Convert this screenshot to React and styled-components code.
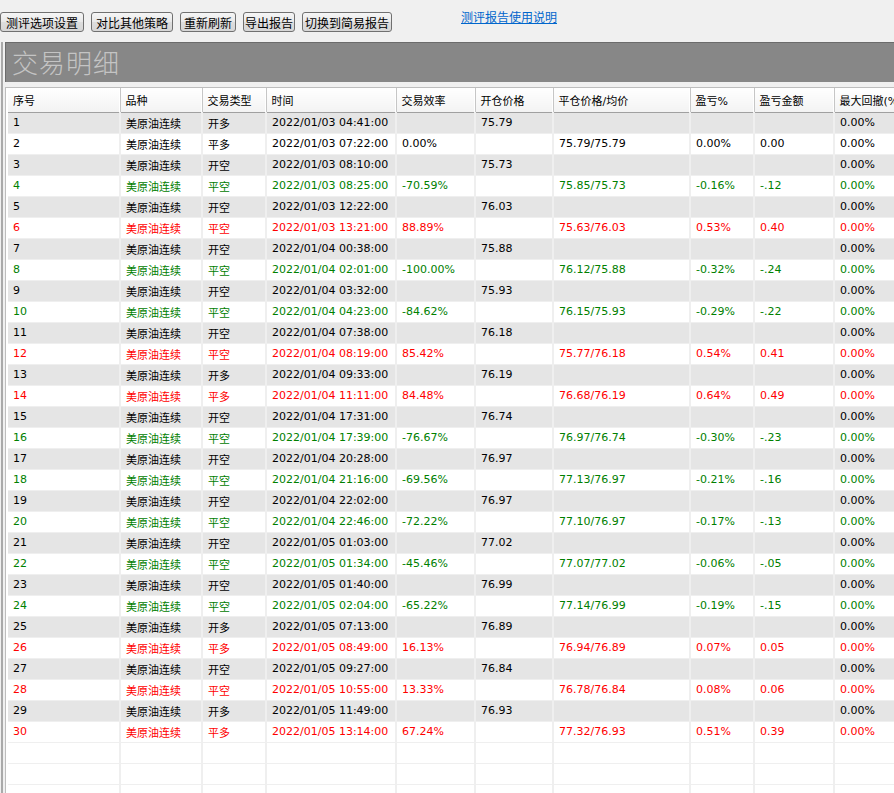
import React from 'react'
import styled, { createGlobalStyle } from 'styled-components'

const GlobalStyle = createGlobalStyle`
  html, body {
    margin: 0;
    padding: 0;
    background: #f0f0f0;
  }
`

const cjk = `"DejaVu Sans", "Noto Sans CJK SC", sans-serif`

const Page = styled.div`
  width: 894px;
  height: 793px;
  overflow: hidden;
  background: #f0f0f0;
  font-family: ${cjk};
  font-size: 11px;
  color: #000;
`

const Toolbar = styled.div`
  height: 42px;
  box-sizing: border-box;
  padding-top: 12px;
  display: flex;
  align-items: flex-start;
  gap: 7px;
`

const ToolButton = styled.button`
  width: ${({ $w }) => $w}px;
  height: 20px;
  padding: 0;
  box-sizing: border-box;
  border: 1px solid #707070;
  border-radius: 3px;
  background: linear-gradient(#f6f6f6, #e8e8e8 50%, #dddddd 51%, #d6d6d6);
  font-family: "Noto Sans CJK SC", sans-serif;
  font-size: 12px;
  line-height: 17px;
  color: #000;
  white-space: nowrap;
`

const HelpLink = styled.a`
  margin-left: 62px;
  margin-top: -3px;
  font-family: "Noto Sans CJK SC", sans-serif;
  font-size: 12px;
  line-height: 16px;
  color: #0066cc;
  text-decoration: underline;
  cursor: pointer;
`

const Frame = styled.div`
  margin-left: 1px;
  border-left: 2px solid #a9a9a9;
  padding-left: 2px;
  height: 751px;
`

const TitleBar = styled.div`
  height: 40px;
  box-sizing: border-box;
  border-top: 1px solid #6b6b6b;
  border-left: 1px solid #6b6b6b;
  background: #878787;
  padding-left: 6px;
  font-family: "Noto Sans CJK SC", sans-serif;
  font-weight: 300;
  font-size: 26px;
  line-height: 37px;
  letter-spacing: 1px;
  color: #c4c4c4;
`

const GridBox = styled.div`
  margin-top: 5px;
  border-top: 1px solid #bdbdbd;
  border-left: 1px solid #bdbdbd;
  background: #fff;
  padding: 0 0 0 2px;
  height: 706px;
  overflow: hidden;
`

const Table = styled.table`
  table-layout: fixed;
  border-collapse: collapse;
  width: 906px;
`

const HeadCell = styled.th`
  height: 24px;
  padding: 0 5px;
  box-sizing: border-box;
  text-align: left;
  font-weight: normal;
  white-space: nowrap;
  overflow: hidden;
  background: linear-gradient(#ffffff, #f3f3f3);
  border-right: 1px solid #c6c6c6;
  box-shadow: inset -1px 0 0 #ffffff;
  border-bottom: 1px solid #a0a0a0;
`

const Row = styled.tr`
  background: ${({ $shade }) => ($shade ? '#e5e5e5' : '#ffffff')};
  color: ${({ $tone }) => ($tone === 'up' ? '#ff0000' : $tone === 'down' ? '#008000' : '#000000')};
`

const Cell = styled.td`
  height: 21px;
  padding: 0 5px;
  box-sizing: border-box;
  white-space: nowrap;
  overflow: hidden;
  border-right: 2px solid #efefef;
  border-bottom: 1px solid #efefef;
`

const columns = [
  { title: '序号', w: 112 },
  { title: '品种', w: 82 },
  { title: '交易类型', w: 64 },
  { title: '时间', w: 130 },
  { title: '交易效率', w: 79 },
  { title: '开仓价格', w: 78 },
  { title: '平仓价格/均价', w: 137 },
  { title: '盈亏%', w: 64 },
  { title: '盈亏金额', w: 80 },
  { title: '最大回撤(%)', w: 80 },
]

// [type, time, efficiency, open, close, pnl%, amount]
const trades = [
  ['开多', '2022/01/03 04:41:00', '', '75.79', '', '', ''],
  ['平多', '2022/01/03 07:22:00', '0.00%', '', '75.79/75.79', '0.00%', '0.00'],
  ['开空', '2022/01/03 08:10:00', '', '75.73', '', '', ''],
  ['平空', '2022/01/03 08:25:00', '-70.59%', '', '75.85/75.73', '-0.16%', '-.12'],
  ['开空', '2022/01/03 12:22:00', '', '76.03', '', '', ''],
  ['平空', '2022/01/03 13:21:00', '88.89%', '', '75.63/76.03', '0.53%', '0.40'],
  ['开空', '2022/01/04 00:38:00', '', '75.88', '', '', ''],
  ['平空', '2022/01/04 02:01:00', '-100.00%', '', '76.12/75.88', '-0.32%', '-.24'],
  ['开空', '2022/01/04 03:32:00', '', '75.93', '', '', ''],
  ['平空', '2022/01/04 04:23:00', '-84.62%', '', '76.15/75.93', '-0.29%', '-.22'],
  ['开空', '2022/01/04 07:38:00', '', '76.18', '', '', ''],
  ['平空', '2022/01/04 08:19:00', '85.42%', '', '75.77/76.18', '0.54%', '0.41'],
  ['开多', '2022/01/04 09:33:00', '', '76.19', '', '', ''],
  ['平多', '2022/01/04 11:11:00', '84.48%', '', '76.68/76.19', '0.64%', '0.49'],
  ['开空', '2022/01/04 17:31:00', '', '76.74', '', '', ''],
  ['平空', '2022/01/04 17:39:00', '-76.67%', '', '76.97/76.74', '-0.30%', '-.23'],
  ['开空', '2022/01/04 20:28:00', '', '76.97', '', '', ''],
  ['平空', '2022/01/04 21:16:00', '-69.56%', '', '77.13/76.97', '-0.21%', '-.16'],
  ['开空', '2022/01/04 22:02:00', '', '76.97', '', '', ''],
  ['平空', '2022/01/04 22:46:00', '-72.22%', '', '77.10/76.97', '-0.17%', '-.13'],
  ['开空', '2022/01/05 01:03:00', '', '77.02', '', '', ''],
  ['平空', '2022/01/05 01:34:00', '-45.46%', '', '77.07/77.02', '-0.06%', '-.05'],
  ['开空', '2022/01/05 01:40:00', '', '76.99', '', '', ''],
  ['平空', '2022/01/05 02:04:00', '-65.22%', '', '77.14/76.99', '-0.19%', '-.15'],
  ['开多', '2022/01/05 07:13:00', '', '76.89', '', '', ''],
  ['平多', '2022/01/05 08:49:00', '16.13%', '', '76.94/76.89', '0.07%', '0.05'],
  ['开空', '2022/01/05 09:27:00', '', '76.84', '', '', ''],
  ['平空', '2022/01/05 10:55:00', '13.33%', '', '76.78/76.84', '0.08%', '0.06'],
  ['开多', '2022/01/05 11:49:00', '', '76.93', '', '', ''],
  ['平多', '2022/01/05 13:14:00', '67.24%', '', '77.32/76.93', '0.51%', '0.39'],
]

const toneOf = (amount) => {
  if (!amount || parseFloat(amount) === 0) return 'flat'
  return amount.startsWith('-') ? 'down' : 'up'
}

const buttons = [
  { text: '测评选项设置', w: 84 },
  { text: '对比其他策略', w: 82 },
  { text: '重新刷新', w: 56 },
  { text: '导出报告', w: 52 },
  { text: '切换到简易报告', w: 90 },
]

const App = () => {
  return (
    <>
      <GlobalStyle />
      <Page>
        <Toolbar>
          {buttons.map((b) => (
            <ToolButton key={b.text} $w={b.w}>{b.text}</ToolButton>
          ))}
          <HelpLink>测评报告使用说明</HelpLink>
        </Toolbar>
        <Frame>
          <TitleBar>交易明细</TitleBar>
          <GridBox>
            <Table>
              <colgroup>
                {columns.map((c) => <col key={c.title} style={{ width: c.w }} />)}
              </colgroup>
              <thead>
                <tr>
                  {columns.map((c) => <HeadCell key={c.title}>{c.title}</HeadCell>)}
                </tr>
              </thead>
              <tbody>
                {trades.map((t, i) => (
                  <Row key={i} $shade={i % 2 === 0} $tone={toneOf(t[6])}>
                    <Cell>{i + 1}</Cell>
                    <Cell>美原油连续</Cell>
                    <Cell>{t[0]}</Cell>
                    <Cell>{t[1]}</Cell>
                    <Cell>{t[2]}</Cell>
                    <Cell>{t[3]}</Cell>
                    <Cell>{t[4]}</Cell>
                    <Cell>{t[5]}</Cell>
                    <Cell>{t[6]}</Cell>
                    <Cell>0.00%</Cell>
                  </Row>
                ))}
                {[0, 1, 2].map((k) => (
                  <Row key={`empty-${k}`}>
                    {columns.map((c) => <Cell key={c.title} />)}
                  </Row>
                ))}
              </tbody>
            </Table>
          </GridBox>
        </Frame>
      </Page>
    </>
  )
}

export default App
